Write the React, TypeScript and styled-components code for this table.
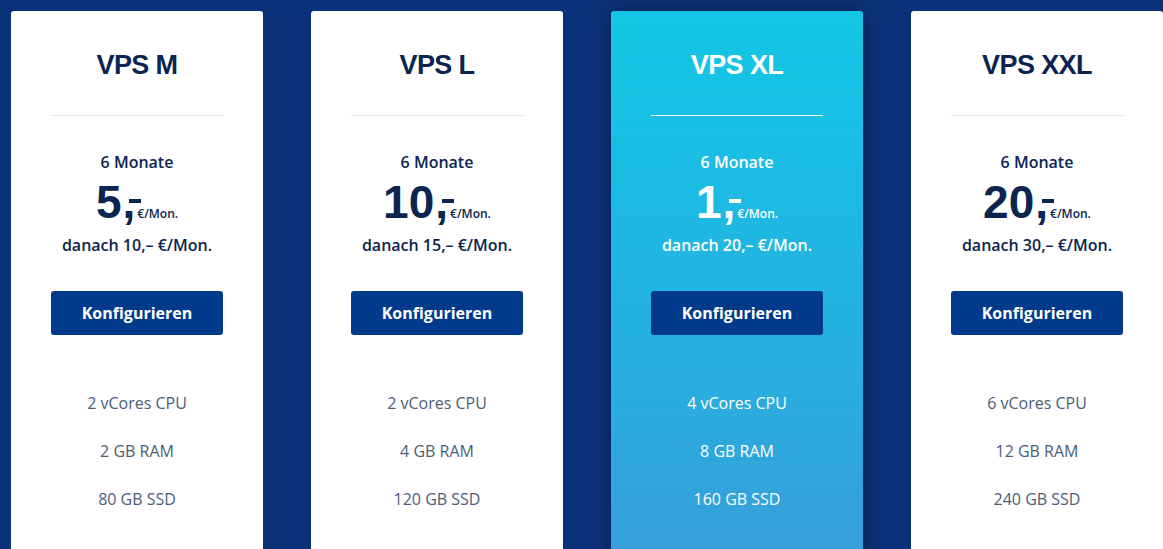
import React from 'react'
import styled, { createGlobalStyle } from 'styled-components'

const GlobalStyle = createGlobalStyle`
  html, body {
    margin: 0;
    padding: 0;
    background: #0b3278;
    overflow: hidden;
  }
  body {
    font-family: 'Open Sans', 'Liberation Sans', Arial, sans-serif;
  }
`

const Grid = styled.div`
  display: grid;
  grid-template-columns: repeat(4, 252px);
  gap: 48px;
  padding: 11px 0 0 11px;
  height: 549px;
  box-sizing: border-box;
`

const Card = styled.div<{ $featured?: boolean }>`
  display: flex;
  flex-direction: column;
  align-items: center;
  padding: 0 40px;
  height: 620px;
  border-radius: 3px;
  text-align: center;
  color: ${p => (p.$featured ? '#ffffff' : '#0b2450')};
  background: ${p =>
    p.$featured ? 'linear-gradient(180deg, #12c7e6 0%, #26b0e0 55%, #3d98d7 100%)' : '#ffffff'};
  box-shadow: ${p => (p.$featured ? '0 0 24px rgba(0, 0, 0, 0.35)' : 'none')};
`

const Title = styled.h2`
  margin: 38px 0 0;
  font-family: 'Liberation Sans', Arial, sans-serif;
  font-weight: 700;
  font-size: 27px;
  line-height: 32px;
  letter-spacing: -0.6px;
`

const Divider = styled.hr<{ $featured?: boolean }>`
  align-self: stretch;
  margin: 34px 0 0;
  border: 0;
  height: 1px;
  background: ${p => (p.$featured ? '#ffffff' : '#e2e2e2')};
`

const Term = styled.div`
  margin-top: 34px;
  font-weight: 600;
  font-size: 16px;
  line-height: 24px;
`

const Price = styled.div`
  margin-top: 4px;
  display: flex;
  align-items: baseline;
  height: 48px;
`

const Amount = styled.span`
  font-family: 'Liberation Sans', Arial, sans-serif;
  font-weight: 700;
  font-size: 46px;
  line-height: 48px;
`

const Comma = styled.span`
  position: relative;
  display: inline-block;
  margin-left: 1px;

  &::after {
    content: '';
    position: absolute;
    left: 7px;
    top: 21px;
    width: 12px;
    height: 4px;
    background: currentColor;
  }
`

const Unit = styled.span`
  margin-left: 2px;
  font-weight: 600;
  font-size: 12px;
`

const After = styled.div`
  margin-top: 7px;
  font-weight: 600;
  font-size: 16px;
  line-height: 24px;
`

const Button = styled.button`
  margin-top: 34px;
  align-self: stretch;
  height: 44px;
  border: 0;
  border-radius: 3px;
  background: #023a8b;
  color: #ffffff;
  font-family: 'Open Sans', Arial, sans-serif;
  font-weight: 700;
  font-size: 16px;
  cursor: pointer;
`

const Features = styled.ul`
  list-style: none;
  margin: 44px 0 0;
  padding: 0;
`

const Feature = styled.li<{ $featured?: boolean }>`
  font-size: 16px;
  line-height: 48px;
  color: ${p => (p.$featured ? '#ffffff' : '#4c5d7a')};
`

type Plan = {
  name: string
  price: string
  after: string
  features: string[]
  featured?: boolean
}

const plans: Plan[] = [
  { name: 'VPS M', price: '5', after: '10', features: ['2 vCores CPU', '2 GB RAM', '80 GB SSD'] },
  { name: 'VPS L', price: '10', after: '15', features: ['2 vCores CPU', '4 GB RAM', '120 GB SSD'] },
  { name: 'VPS XL', price: '1', after: '20', features: ['4 vCores CPU', '8 GB RAM', '160 GB SSD'], featured: true },
  { name: 'VPS XXL', price: '20', after: '30', features: ['6 vCores CPU', '12 GB RAM', '240 GB SSD'] },
]

export default function App() {
  return (
    <>
      <GlobalStyle />
      <Grid>
        {plans.map(plan => (
          <Card key={plan.name} $featured={plan.featured}>
            <Title>{plan.name}</Title>
            <Divider $featured={plan.featured} />
            <Term>6 Monate</Term>
            <Price>
              <Amount>
                {plan.price}
                <Comma>,</Comma>
              </Amount>
              <Unit>€/Mon.</Unit>
            </Price>
            <After>danach {plan.after},– €/Mon.</After>
            <Button>Konfigurieren</Button>
            <Features>
              {plan.features.map(f => (
                <Feature key={f} $featured={plan.featured}>{f}</Feature>
              ))}
            </Features>
          </Card>
        ))}
      </Grid>
    </>
  )
}
